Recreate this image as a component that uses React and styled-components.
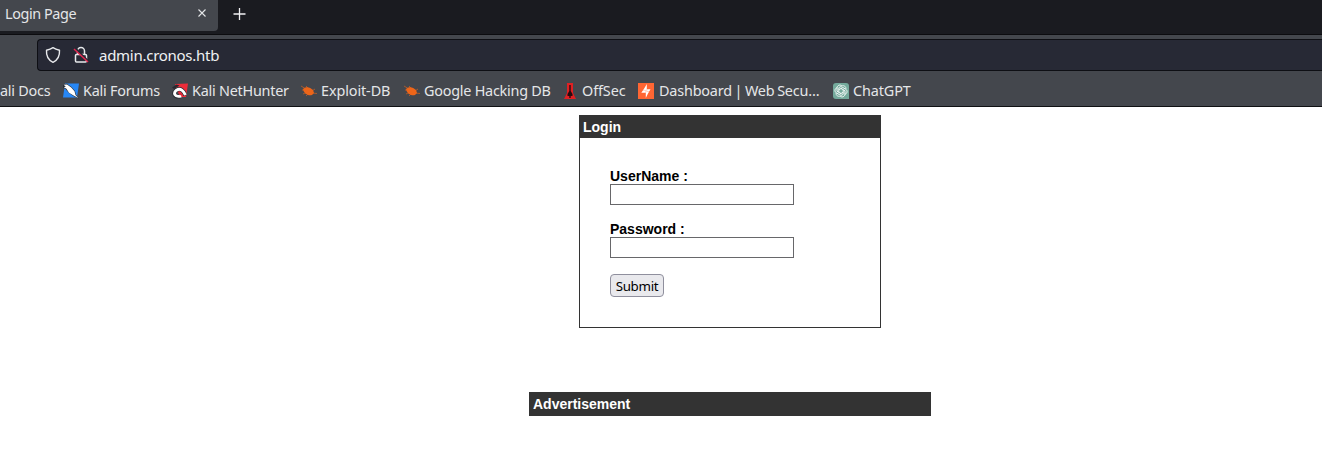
import React from "react";
import styled, { createGlobalStyle } from "styled-components";

const Global = createGlobalStyle`
  body { margin: 0; background: #fff; overflow: hidden; }
  * { box-sizing: border-box; }
`;
const ui = `"Noto Sans", sans-serif`;

const Window = styled.div`
  display: flex;
  flex-direction: column;
  width: 1322px;
  height: 456px;
  overflow: hidden;
  background: #fff;
`;
const TabStrip = styled.div`
  display: flex;
  align-items: flex-start;
  height: 35px;
  background: #1a1b20;
  border-bottom: 1px solid #0c0c0f;
  font: 14.4px/20px ${ui};
  color: #e4e6e8;
`;
const Tab = styled.div`
  display: flex;
  justify-content: space-between;
  width: 218px;
  height: 31px;
  padding: 4px 11px 0 5px;
  background: #44474d;
  border-radius: 0 0 4px 0;
`;
const TabTitle = styled.span`
  letter-spacing: -0.4px;
  white-space: nowrap;
`;
const TabIcon = styled.svg`
  width: 10px;
  height: 10px;
  margin-top: 4px;
`;
const NewTab = styled.svg`
  width: 14px;
  height: 14px;
  margin: 7px 0 0 15px;
`;
const Toolbar = styled.div`
  height: 37px;
  padding: 4px 0 0 37px;
  background: #44474d;
`;
const AddressBar = styled.div`
  display: flex;
  align-items: center;
  height: 32px;
  padding-left: 7px;
  background: #272935;
  border: 1px solid #0e0f14;
  border-right: 0;
  border-radius: 4px 0 0 4px;
  color: #f0f1f3;
  font: 15px/20px ${ui};
  letter-spacing: -0.27px;
`;
const AddressIcon = styled.svg`
  flex: none;
  width: 16px;
  height: 18px;
  margin-right: ${(p) => p.$gap}px;
`;
const Bookmarks = styled.div`
  display: flex;
  align-items: center;
  height: 35px;
  padding-top: 3px;
  background: #44474d;
  border-bottom: 1px solid #101114;
  color: #e4e6e8;
  font: 14.4px/20px ${ui};
`;
const Bookmark = styled.div`
  display: flex;
  flex: none;
  align-items: center;
  gap: ${(p) => p.$gap ?? 4}px;
  width: ${(p) => p.$width}px;
  letter-spacing: ${(p) => p.$tracking};
  word-spacing: ${(p) => p.$words ?? "0"};
  white-space: nowrap;
`;
const Favicon = styled.svg`
  flex: none;
  width: 16px;
  height: 16px;
`;
const Page = styled.main`
  display: flex;
  flex-direction: column;
  align-items: center;
  padding: 8px 0 0 138px;
  font: 14px/16px "Liberation Sans", Arial, sans-serif;
  color: #000;
`;
const LoginBox = styled.section`
  width: 302px;
  height: 213px;
  border: 1px solid #333;
`;
const Heading = styled.div`
  padding: 3px;
  height: 22px;
  background: #333;
  color: #fff;
  font-weight: bold;
`;
const Form = styled.div`
  display: flex;
  flex-direction: column;
  align-items: flex-start;
  padding: 30px;
`;
const Label = styled.label`
  font-weight: bold;
`;
const Field = styled.input`
  width: 184px;
  height: 21px;
  margin: 0 0 16px;
  padding: 1px 2px;
  background: #fff;
  border: 1px solid #67676a;
  border-radius: 0;
`;
const Submit = styled.button`
  width: 54px;
  height: 23px;
  padding: 1px 0 0;
  background: #e9e9ed;
  border: 1px solid #8f8f9d;
  border-radius: 4px;
  color: #000;
  font: 13.333px/19px ${ui};
  letter-spacing: -0.3px;
`;
const Advertisement = styled.section`
  width: 402px;
  height: 24px;
  margin-top: 64px;
  padding: 4px;
  background: #333;
  color: #fff;
  font-weight: bold;
`;

const Forums = () => (
  <Favicon viewBox="0 0 16 16">
    <path d="M2 .5H16L14 14.500H0Z" fill="#2787f5" />
    <path d="M0 1.500L4 .8 8.500 4l3.500 4 1 3.500 3 4-5-2-5-3.500L2.500 6 0 4.800Z" fill="#2a303a" />
    <path d="M.5 1.800L4 1.500l4.200 3L11.500 8.300l1 3.700 2.800 3-4.300-2.200-5-3L3.500 5.800 .8 4.300l2-.8Z" fill="#fff" />
  </Favicon>
);
const NetHunter = () => (
  <Favicon viewBox="0 0 16 16">
    <path d="M3 1L16 .5L14 14H8Z" fill="#ec2c3a" />
    <path d="M0 4.500L4.500 1.500l3 1L2 6Z" fill="#292a30" />
    <path d="M8.800 13.200C1.500 14.800.9 9.500 4.400 7.100 8.500 4.500 11.800 7.700 13.200 12.300" fill="none" stroke="#292a30" strokeWidth="4" />
    <path d="M9.200 13C2 14.600 1.200 9.700 4.500 7.200 8.500 4.700 11.800 7.900 13.400 12.100" fill="none" stroke="#fff" strokeWidth="2.900" />
    <path d="M6.500 10.200l2.800-.4 1.500 2.200-3 .3Z" fill="#d92836" />
  </Favicon>
);
const Bug = () => (
  <Favicon viewBox="0 0 16 16" fill="#ed6519" stroke="#ed6519">
    <path d="M2 6C5 3 9 4 12 7l1 3-2 2c-4 1-8-1-9-6Z" stroke="none" />
    <path d="M0 3l5 3M5 3l3 3M1 7h3M2 11l4-2M5 13l3-3M11 8l3-2M11 10l5 .5" strokeWidth=".6" fill="none" />
  </Favicon>
);
const OffSec = () => (
  <Favicon viewBox="0 0 16 16">
    <path d="M5 0h6v10l3 6H2l3-6Z" fill="#df2023" />
    <path d="M7.300 2h1.400v6l1.800 3v2H8.700v2H7.300v-2H5.500v-2l1.800-3Z" fill="#260c10" />
  </Favicon>
);
const Burp = () => (
  <Favicon viewBox="0 0 16 16">
    <path d="M0 0h16v16H0Z" fill="#ff6633" />
    <path d="M8.800 1v5.200h3.700L10 10.500 7.800 15V9.700H3.300L6.500 5Z" fill="#fff" />
    <path d="M8.800 6.200v2.300H12M7.800 9.700V7.300H5" fill="none" stroke="#ff6633" strokeWidth=".3" />
  </Favicon>
);
const ChatGPT = () => (
  <Favicon viewBox="0 0 16 16">
    <path d="M3 0h10a3 3 0 0 1 3 3v13H3a3 3 0 0 1-3-3V3a3 3 0 0 1 3-3Z" fill="#74aa9c" />
    <g fill="none" stroke="#fff" strokeWidth=".8">
      {[0, 60, 120, 180, 240, 300].map((a) => (
        <path key={a} transform={`rotate(${a} 8 8)`} d="M5.800 9.300V4.700L8.800 3c2.200-1.200 4.700.9 4 3.200" />
      ))}
    </g>
  </Favicon>
);

const bookmarks = [
  { name: "Kali Forums", icon: Forums, width: 109 },
  { name: "Kali NetHunter", icon: NetHunter, width: 129 },
  { name: "Exploit-DB", icon: Bug, width: 103, tracking: "-0.1px" },
  { name: "Google Hacking DB", icon: Bug, width: 158 },
  { name: "OffSec", icon: OffSec, width: 76, tracking: "-0.1px" },
  { name: "Dashboard | Web Secu…", icon: Burp, width: 195, gap: 5, tracking: "-0.18px", words: "-0.9px" },
  { name: "ChatGPT", icon: ChatGPT, width: 90, tracking: "-0.1px" },
];

export default function App() {
  return (
    <Window>
      <Global />
      <TabStrip>
        <Tab>
          <TabTitle>Login Page</TabTitle>
          <TabIcon viewBox="0 0 10 10"><path d="M1.500 1.500l7 7m0-7l-7 7" stroke="#e4e6e8" strokeWidth="1.100" /></TabIcon>
        </Tab>
        <NewTab viewBox="0 0 14 14"><path d="M6.500 1v12M.500 7h12" stroke="#f2f2f4" strokeWidth="1.300" /></NewTab>
      </TabStrip>
      <Toolbar>
        <AddressBar>
          <AddressIcon $gap={12} viewBox="0 0 16 18" fill="none" stroke="#e8e9ec" strokeWidth="1.400" strokeLinejoin="round">
            <path d="M8 1.700c2 1.300 4 2 6.500 2.600.4 5.700-2 9.900-6.500 12-4.500-2.100-6.900-6.300-6.500-12C4 3.700 6 3 8 1.700Z" />
          </AddressIcon>
          <AddressIcon $gap={10} viewBox="0 0 16 18" fill="none" stroke="#e8e9ec" strokeWidth="1.500">
            <path d="M4.500 8V5a3.500 3.500 0 0 1 7 0v3M3.500 8.500h9a1 1 0 0 1 1 1v5.500a1 1 0 0 1-1 1h-9a1 1 0 0 1-1-1V9.500a1 1 0 0 1 1-1Z" />
            <path d="M2 2l13 13" stroke="#272935" strokeWidth="2" />
            <path d="M1 3l14 13" stroke="#e22850" strokeWidth="1.500" />
          </AddressIcon>
          <span>admin.cronos.htb</span>
        </AddressBar>
      </Toolbar>
      <Bookmarks>
        <Bookmark $width={63} $tracking="-0.24px">ali Docs</Bookmark>
        {bookmarks.map(({ name, icon: Icon, width, gap, words, tracking = "-0.24px" }) => (
          <Bookmark key={name} $width={width} $gap={gap} $words={words} $tracking={tracking}><Icon />{name}</Bookmark>
        ))}
      </Bookmarks>
      <Page>
        <LoginBox>
          <Heading>Login</Heading>
          <Form>
            <Label htmlFor="username">UserName :</Label>
            <Field id="username" />
            <Label htmlFor="password">Password :</Label>
            <Field id="password" type="password" />
            <Submit>Submit</Submit>
          </Form>
        </LoginBox>
        <Advertisement>Advertisement</Advertisement>
      </Page>
    </Window>
  );
}
